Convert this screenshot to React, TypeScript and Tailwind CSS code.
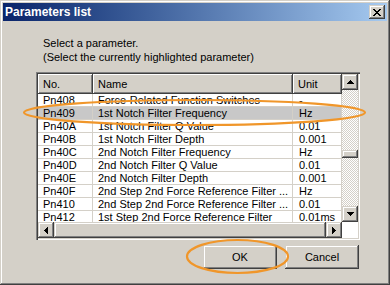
import React from 'react';

interface Param {
  no: string;
  name: string;
  unit: string;
}

const params: Param[] = [
  { no: 'Pn408', name: 'Force-Related Function Switches', unit: '-' },
  { no: 'Pn409', name: '1st Notch Filter Frequency', unit: 'Hz' },
  { no: 'Pn40A', name: '1st Notch Filter Q Value', unit: '0.01' },
  { no: 'Pn40B', name: '1st Notch Filter Depth', unit: '0.001' },
  { no: 'Pn40C', name: '2nd Notch Filter Frequency', unit: 'Hz' },
  { no: 'Pn40D', name: '2nd Notch Filter Q Value', unit: '0.01' },
  { no: 'Pn40E', name: '2nd Notch Filter Depth', unit: '0.001' },
  { no: 'Pn40F', name: '2nd Step 2nd Force Reference Filter ...', unit: 'Hz' },
  { no: 'Pn410', name: '2nd Step 2nd Force Reference Filter ...', unit: '0.01' },
  { no: 'Pn412', name: '1st Step 2nd Force Reference Filter', unit: '0.01ms' },
];

const SELECTED = 'Pn409';

// classic win9x bevels
const raised =
  'shadow-[inset_-1px_-1px_0_#404040,inset_1px_1px_0_#d4d0c8,inset_-2px_-2px_0_#808080,inset_2px_2px_0_#ffffff]';

const Triangle = ({ dir }: { dir: 'up' | 'down' | 'left' | 'right' }) => {
  const rects =
    dir === 'up'
      ? [[3, 0, 1, 1], [2, 1, 3, 1], [1, 2, 5, 1], [0, 3, 7, 1]]
      : dir === 'down'
      ? [[0, 0, 7, 1], [1, 1, 5, 1], [2, 2, 3, 1], [3, 3, 1, 1]]
      : dir === 'left'
      ? [[0, 3, 1, 1], [1, 2, 1, 3], [2, 1, 1, 5], [3, 0, 1, 7]]
      : [[0, 0, 1, 7], [1, 1, 1, 5], [2, 2, 1, 3], [3, 3, 1, 1]];
  const w = dir === 'up' || dir === 'down' ? 7 : 4;
  const h = dir === 'up' || dir === 'down' ? 4 : 7;
  return (
    <svg width={w} height={h} viewBox={`0 0 ${w} ${h}`} shapeRendering="crispEdges">
      {rects.map(([x, y, rw, rh], i) => (
        <rect key={i} x={x} y={y} width={rw} height={rh} fill="#000" />
      ))}
    </svg>
  );
};

const ScrollButton = ({ dir }: { dir: 'up' | 'down' | 'left' | 'right' }) => (
  <div className={`w-[16px] h-[16px] shrink-0 bg-[#d4d0c8] flex items-center justify-center ${raised}`}>
    <Triangle dir={dir} />
  </div>
);

const Button = ({ label }: { label: string }) => (
  <div className={`w-[74px] h-[24px] bg-[#d4d0c8] flex items-center justify-center text-[11px] text-black ${raised}`}>
    {label}
  </div>
);

export default function App() {
  return (
    <div
      className="relative w-[390px] h-[285px] bg-[#d4d0c8] p-[3px] overflow-hidden shadow-[inset_-1px_-1px_0_#404040,inset_1px_1px_0_#d4d0c8,inset_-2px_-2px_0_#808080,inset_2px_2px_0_#ffffff]"
      style={{ fontFamily: '"Liberation Sans", Arial, sans-serif' }}
    >
      {/* Title bar */}
      <div className="h-[18px] flex items-center justify-between bg-gradient-to-r from-[#0a246a] to-[#a6caf0] pl-[2px] pr-[2px]">
        <span className="text-[12px] font-bold text-white leading-none">Parameters list</span>
        <div className={`w-[16px] h-[14px] bg-[#d4d0c8] flex items-center justify-center ${raised}`}>
          <svg width="8" height="7" viewBox="0 0 8 7" shapeRendering="crispEdges">
            <path d="M0 0h2v1H0zM6 0h2v1H6zM1 1h2v1H1zM5 1h2v1H5zM2 2h4v1H2zM3 3h2v1H3zM2 4h4v1H2zM1 5h2v1H1zM5 5h2v1H5zM0 6h2v1H0zM6 6h2v1H6z" fill="#000" />
          </svg>
        </div>
      </div>

      {/* Prompt */}
      <div className="mt-[15px] ml-[40px] text-[11px] leading-[14px] text-black">
        <div>Select a parameter.</div>
        <div>(Select the currently highlighted parameter)</div>
      </div>

      {/* List view */}
      <div className="mt-[8px] ml-[33px] w-[324px] h-[168px] p-[2px] bg-[#d4d0c8] flex shadow-[inset_1px_1px_0_#808080,inset_2px_2px_0_#404040,inset_-1px_-1px_0_#ffffff,inset_-2px_-2px_0_#d4d0c8]">
        <div className="w-[304px] flex flex-col">
          <div className="h-[20px] grid grid-cols-[55px_200px_49px] text-[11px] text-black">
            {['No.', 'Name', 'Unit'].map((h) => (
              <div
                key={h}
                className="bg-[#d4d0c8] flex items-center pl-[5px] shadow-[inset_-1px_-1px_0_#404040,inset_1px_1px_0_#ffffff,inset_-2px_-2px_0_#808080]"
              >
                {h}
              </div>
            ))}
          </div>
          <div className="h-[128px] bg-white overflow-hidden">
            {params.map((p) => (
              <div
                key={p.no}
                className={`h-[13px] grid grid-cols-[55px_200px_49px] text-[11px] leading-[12px] text-black ${
                  p.no === SELECTED ? 'bg-[#c8c8c8]' : ''
                }`}
              >
                <div className="pl-[5px] border-r border-b border-[#d4d0c8] whitespace-nowrap overflow-hidden">{p.no}</div>
                <div className="pl-[5px] border-r border-b border-[#d4d0c8] whitespace-nowrap overflow-hidden">{p.name}</div>
                <div className="pl-[6px] border-r border-b border-[#d4d0c8] whitespace-nowrap overflow-hidden">{p.unit}</div>
              </div>
            ))}
          </div>
          <div className="h-[16px] flex">
            <ScrollButton dir="left" />
            <div className={`flex-1 bg-[#d4d0c8] ${raised}`} />
            <ScrollButton dir="right" />
          </div>
        </div>
        <div className="w-[16px] flex flex-col">
          <ScrollButton dir="up" />
          <div className="h-[116px] bg-[image:repeating-conic-gradient(#ffffff_0_25%,#d4d0c8_0_50%)] bg-[length:2px_2px]">
            <div className={`mt-[60px] h-[8px] bg-[#d4d0c8] ${raised}`} />
          </div>
          <ScrollButton dir="down" />
          <div className="h-[16px] bg-white" />
        </div>
      </div>

      {/* Buttons */}
      <div className="mt-[5px] pl-[200px] flex gap-[8px]">
        <Button label="OK" />
        <Button label="Cancel" />
      </div>

      {/* Annotation marks */}
      <svg className="absolute left-0 top-0 pointer-events-none" width="390" height="285" viewBox="0 0 390 285">
        <ellipse cx="194.5" cy="112.5" rx="170.5" ry="12.5" fill="none" stroke="#f0962a" strokeWidth="2.2" />
        <ellipse cx="237.5" cy="256.5" rx="50.5" ry="16.5" fill="none" stroke="#f0962a" strokeWidth="2.2" />
      </svg>
    </div>
  );
}
